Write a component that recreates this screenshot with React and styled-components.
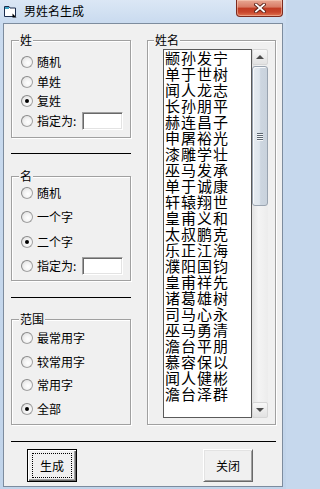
import React from 'react';
import styled, { createGlobalStyle } from 'styled-components';

const Global = createGlobalStyle`
  html, body { margin: 0; padding: 0; }
  body {
    width: 286px; height: 489px; overflow: hidden;
    background: #c6d8ed;
    font-family: "Noto Sans CJK SC", "Noto Sans", sans-serif;
  }
`;

const Window = styled.div`
  width: 286px; height: 489px; box-sizing: border-box;
  display: flex; flex-direction: column;
  padding: 0 3px 2px 3px;
  background: linear-gradient(180deg, #dbe7f5 0px, #cadbef 22px, #c1d4ea 100%);
`;

const TitleBar = styled.div`
  height: 23px; flex: none;
  display: flex; align-items: flex-start;
`;

const TitleIcon = styled.svg`
  margin: 6px 0 0 1px; flex: none;
`;

const TitleText = styled.div`
  margin: 4px 0 0 7px;
  font-size: 12px; line-height: 14px; color: #000;
`;

const CloseButton = styled.div`
  margin-left: auto;
  width: 47px; height: 17px; box-sizing: border-box;
  border: 1px solid #7d2a1e; border-top: none;
  border-radius: 0 0 4px 4px;
  background: linear-gradient(180deg, #e8a793 0%, #d87a64 45%, #c13b22 50%, #c8452c 75%, #e07452 100%);
  box-shadow: inset 0 0 0 1px rgba(255, 220, 200, 0.45);
  display: flex; align-items: center; justify-content: center;
`;

const Client = styled.div`
  flex: 1;
  box-sizing: border-box;
  border: 1px solid #7d8c9e;
  background: #f0f0f0;
  padding: 16px 6px 0 7px;
  display: flex; flex-direction: column;
`;

const MainRow = styled.div`
  height: 385px;
  display: flex; gap: 16px;
`;

const LeftColumn = styled.div`
  width: 120px;
  display: flex; flex-direction: column;
`;

const Group = styled.div`
  position: relative;
  box-sizing: border-box;
  height: ${p => p.$h}px;
  width: ${p => p.$w || 120}px;
  border: 1px solid #a0a0a0;
  box-shadow: inset 1px 1px 0 #fff, 1px 1px 0 #fff;
  padding: ${p => p.$pad};
  display: flex; flex-direction: ${p => (p.$row ? 'row' : 'column')};
`;

const Legend = styled.div`
  position: absolute; top: -8px; left: ${p => p.$left || 7}px;
  padding: 0 1px;
  background: #f0f0f0;
  font-size: 12px; line-height: 14px; color: #000;
`;

const Separator = styled.div`
  height: 1px; background: #000;
  width: ${p => p.$w}px;
  margin: ${p => p.$m};
  flex: none;
`;

const OptionRow = styled.div`
  height: ${p => p.$h}px;
  display: flex; align-items: center; gap: 4px;
  flex: none;
`;

const Radio = styled.span`
  width: 12px; height: 12px; box-sizing: border-box; flex: none;
  border-radius: 50%;
  border: 1px solid #a2a2a2;
  border-top-color: #8a8a8a; border-left-color: #8a8a8a;
  background: radial-gradient(circle at 60% 60%, #ffffff 0%, #f2f2f2 45%, #d4d4d4 100%);
  display: flex; align-items: center; justify-content: center;
  &::after {
    content: '';
    width: 4px; height: 4px; border-radius: 50%;
    background: ${p => (p.$checked ? '#000' : 'transparent')};
  }
`;

const OptionLabel = styled.span`
  font-size: 12px; line-height: 14px; color: #000; white-space: nowrap;
`;

const TextBox = styled.div`
  width: 41px; height: 18px; box-sizing: border-box; flex: none;
  margin-left: 2px;
  background: #fff;
  border: 1px solid #fff;
  border-top-color: #a0a0a0; border-left-color: #a0a0a0;
  box-shadow: inset 1px 1px 0 #696969, inset -1px -1px 0 #e3e3e3;
`;

const ListBox = styled.div`
  width: 89px; height: 369px; box-sizing: border-box; flex: none;
  border: 1px solid #5a5a5a;
  background: #fff;
  overflow: hidden;
  padding-left: 1px;
`;

const ListItem = styled.div`
  font-size: 15px; line-height: 16px; height: 16px;
  letter-spacing: 1px;
  color: #000; white-space: nowrap;
`;

const ScrollBar = styled.div`
  width: 16px; height: 369px; flex: none;
  display: flex; flex-direction: column;
  background: linear-gradient(90deg, #e3e3e3, #f4f4f4 40%, #ececec);
`;

const ScrollButton = styled.div`
  width: 16px; height: 16px; box-sizing: border-box; flex: none;
  border: 1px solid #d6d6d6; border-radius: 2px;
  background: linear-gradient(180deg, #f8f8f8, #ececec 50%, #e2e2e2);
  display: flex; align-items: center; justify-content: center;
`;

const Arrow = styled.span`
  width: 0; height: 0;
  border-left: 4px solid transparent; border-right: 4px solid transparent;
  ${p => (p.$down ? 'border-top: 4px solid #4d4d4d;' : 'border-bottom: 4px solid #4d4d4d;')}
`;

const Track = styled.div`
  flex: 1;
  padding-top: 1px;
`;

const Thumb = styled.div`
  height: 140px; box-sizing: border-box;
  border: 1px solid #9aa4b0; border-radius: 3px;
  background: linear-gradient(90deg, #e6ebf0 0%, #dfe6ed 45%, #cdd6e0 55%, #c9d2dc 100%);
  box-shadow: inset 1px 1px 0 #f7f9fb;
  display: flex; flex-direction: column; align-items: center; justify-content: center; gap: 1px;
`;

const Grip = styled.span`
  width: 6px; height: 1px; background: #5c6670;
  box-shadow: 0 1px 0 #f5f7f9;
`;

const ButtonRow = styled.div`
  height: 33px;
  display: flex; justify-content: space-between;
  padding: 0 23px 0 16px;
`;

const DialogButton = styled.div`
  width: 50px; height: 33px; box-sizing: border-box;
  background: #f0f0f0;
  border: 1px solid ${p => (p.$default ? '#000' : '#fff')};
  ${p => (p.$default ? '' : 'border-right-color: #696969; border-bottom-color: #696969;')}
  box-shadow: ${p =>
    p.$default
      ? 'inset 1px 1px 0 #fff, inset -1px -1px 0 #696969, inset -2px -2px 0 #a0a0a0'
      : 'inset 1px 1px 0 #e3e3e3, inset -1px -1px 0 #a0a0a0'};
  display: flex; align-items: center; justify-content: center;
  font-size: 12px; color: #000;
  padding: 3px 4px 3px 4px;
`;

const FocusRect = styled.div`
  flex: 1; align-self: stretch;
  border: 1px dotted #000;
  display: flex; align-items: center; justify-content: center;
  line-height: 14px;
`;

const names = [
  '颛孙发宁', '单于世树', '闻人龙志', '长孙朋平', '赫连昌子', '申屠裕光',
  '漆雕学壮', '巫马发承', '单于诚康', '轩辕翔世', '皇甫义和', '太叔鹏克',
  '乐正江海', '濮阳国钧', '皇甫祥先', '诸葛雄树', '司马心永', '巫马勇清',
  '澹台平朋', '慕容保以', '闻人健彬', '澹台泽群',
];

function Option({ label, checked, h, input }) {
  return (
    <OptionRow $h={h}>
      <Radio $checked={checked} />
      <OptionLabel>{label}</OptionLabel>
      {input && <TextBox />}
    </OptionRow>
  );
}

export default function App() {
  return (
    <>
      <Global />
      <Window>
        <TitleBar>
          <TitleIcon width="13" height="12" viewBox="0 0 13 12">
            <path d="M0.5 0.5 H5 L6 2 H11.5 V10.5 H0.5 Z" fill="#fff" stroke="#1c2d4d" />
            <rect x="1" y="1" width="4" height="2" fill="#3ba3c6" />
            <path d="M8.5 7.5 L12.5 11.5 H8.5 Z" fill="#000" />
          </TitleIcon>
          <TitleText>男姓名生成</TitleText>
          <CloseButton>
            <svg width="12" height="10" viewBox="0 0 12 10">
              <path d="M2 1.5 L10 8.5 M10 1.5 L2 8.5" stroke="#5b2016" strokeWidth="3.6" strokeLinecap="square" />
              <path d="M2 1.5 L10 8.5 M10 1.5 L2 8.5" stroke="#fff" strokeWidth="1.8" strokeLinecap="square" />
            </svg>
          </CloseButton>
        </TitleBar>
        <Client>
          <MainRow>
            <LeftColumn>
              <Group $h={98} $pad="11px 0 0 9px">
                <Legend>姓</Legend>
                <Option label="随机" h={19.7} />
                <Option label="单姓" h={19.7} />
                <Option label="复姓" h={19.7} checked />
                <Option label="指定为:" h={19.7} input />
              </Group>
              <Separator $w={120} $m="15px 0 22px 0" />
              <Group $h={105} $pad="4px 0 0 9px">
                <Legend>名</Legend>
                <Option label="随机" h={24.3} />
                <Option label="一个字" h={24.3} />
                <Option label="二个字" h={24.3} checked />
                <Option label="指定为:" h={24.3} input />
              </Group>
              <Separator $w={120} $m="16px 0 21px 0" />
              <Group $h={106} $pad="6px 0 0 9px">
                <Legend>范围</Legend>
                <Option label="最常用字" h={23.8} />
                <Option label="较常用字" h={23.8} />
                <Option label="常用字" h={23.8} />
                <Option label="全部" h={23.8} checked />
              </Group>
            </LeftColumn>
            <Group $h={385} $w={129} $pad="8px 7px 6px 15px" $row>
              <Legend $left={6}>姓名</Legend>
              <ListBox>
                {names.map((n, i) => (
                  <ListItem key={i}>{n}</ListItem>
                ))}
              </ListBox>
              <ScrollBar>
                <ScrollButton><Arrow /></ScrollButton>
                <Track>
                  <Thumb>
                    <Grip /><Grip /><Grip /><Grip />
                  </Thumb>
                </Track>
                <ScrollButton><Arrow $down /></ScrollButton>
              </ScrollBar>
            </Group>
          </MainRow>
          <Separator $w={265} $m="16px 0 7px 0" />
          <ButtonRow>
            <DialogButton $default>
              <FocusRect>生成</FocusRect>
            </DialogButton>
            <DialogButton>关闭</DialogButton>
          </ButtonRow>
        </Client>
      </Window>
    </>
  );
}
